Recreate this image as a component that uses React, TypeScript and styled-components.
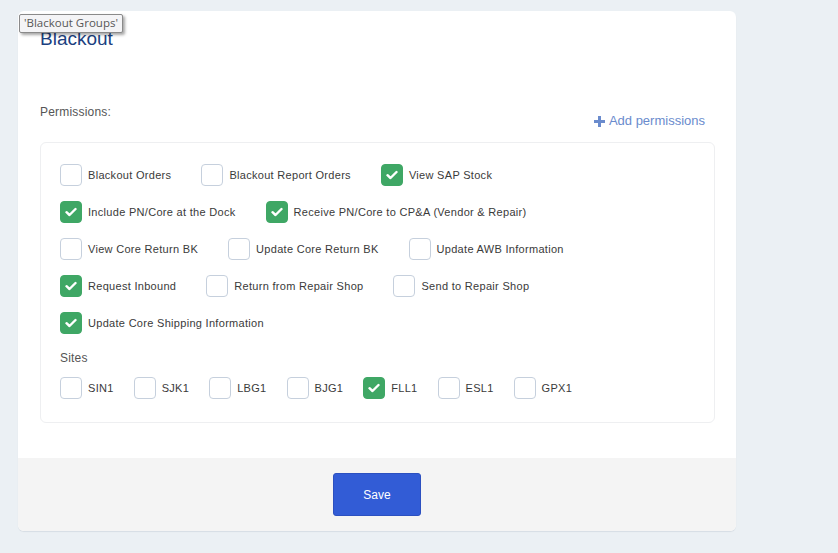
import styled, { createGlobalStyle } from "styled-components";

const GlobalStyle = createGlobalStyle`
  html, body {
    margin: 0;
    padding: 0;
    background: #ebf0f4;
    font-family: "Liberation Sans", Arial, sans-serif;
  }
`;

const Page = styled.div`
  padding: 11px 102px 22px 18px;
  min-height: 553px;
  box-sizing: border-box;
`;

const Card = styled.div`
  position: relative;
  width: 718px;
  background: #fff;
  border-radius: 6px;
  box-shadow: 0 1px 1px rgba(40, 60, 90, 0.1);
`;

const Body = styled.div`
  padding: 17px 21px 35px 22px;
`;

const Title = styled.h1`
  margin: 0;
  font-size: 19px;
  line-height: 22px;
  font-weight: 400;
  color: #1b3f80;
`;

// hover title of the page tab, drawn over the heading
const Tooltip = styled.div`
  position: absolute;
  left: 1px;
  top: 3px;
  padding: 1px 4px 2px;
  font-family: "Open Sans", "Liberation Sans", sans-serif;
  font-size: 11.5px;
  line-height: 14px;
  color: #575757;
  background: #f4f4f6;
  border: 1px solid #8a8a8a;
  border-radius: 2px;
  box-shadow: 2px 2px 3px rgba(0, 0, 0, 0.35);
`;

const PermHeader = styled.div`
  display: flex;
  justify-content: space-between;
  align-items: flex-start;
  margin-top: 55px;
  margin-bottom: 13px;
`;

const Label = styled.div`
  font-size: 12px;
  line-height: 14px;
  color: #555;
  letter-spacing: 0.2px;
`;

const AddLink = styled.a`
  display: flex;
  align-items: center;
  gap: 4px;
  margin-top: 8px;
  margin-right: 10px;
  font-size: 13px;
  line-height: 16px;
  color: #6a8bcd;
  cursor: pointer;
`;

const Panel = styled.div`
  border: 1px solid #eeeff1;
  border-radius: 6px;
  padding: 21px 19px 23px 19px;
  display: flex;
  flex-direction: column;
  gap: 15px;
`;

const Row = styled.div<{ $gap: number }>`
  display: flex;
  align-items: center;
  gap: ${(p) => p.$gap}px;
`;

const Item = styled.label`
  display: flex;
  align-items: center;
  gap: 6px;
  font-size: 11px;
  letter-spacing: 0.3px;
  color: #3a3a3a;
  cursor: pointer;
`;

const Box = styled.span<{ $checked: boolean }>`
  box-sizing: border-box;
  width: 22px;
  height: 22px;
  border-radius: 4px;
  display: flex;
  align-items: center;
  justify-content: center;
  border: 1px solid ${(p) => (p.$checked ? "#3fa765" : "#c6d0dd")};
  background: ${(p) => (p.$checked ? "#3fa765" : "#fff")};
`;

const SitesLabel = styled(Label)`
  margin-top: 2px;
  margin-bottom: -3px;
`;

const Footer = styled.div`
  background: #f4f4f4;
  height: 73px;
  border-radius: 0 0 6px 6px;
  display: flex;
  justify-content: center;
  align-items: center;
`;

const SaveButton = styled.button`
  width: 88px;
  height: 43px;
  border: 1px solid #2c50c0;
  border-radius: 3px;
  background: #325cd6;
  color: #fff;
  font-family: "Liberation Sans", Arial, sans-serif;
  font-size: 12px;
  cursor: pointer;
`;

const Check = () => (
  <svg width="12" height="10" viewBox="0 0 12 10">
    <path
      d="M1.5 5.2 L4.5 8 L10.5 2"
      fill="none"
      stroke="#fff"
      strokeWidth="2.4"
      strokeLinecap="round"
      strokeLinejoin="round"
    />
  </svg>
);

function CheckItem({ label, checked }: { label: string; checked?: boolean }) {
  return (
    <Item>
      <Box $checked={!!checked}>{checked && <Check />}</Box>
      {label}
    </Item>
  );
}

const rows: [string, boolean][][] = [
  [
    ["Blackout Orders", false],
    ["Blackout Report Orders", false],
    ["View SAP Stock", true],
  ],
  [
    ["Include PN/Core at the Dock", true],
    ["Receive PN/Core to CP&A (Vendor & Repair)", true],
  ],
  [
    ["View Core Return BK", false],
    ["Update Core Return BK", false],
    ["Update AWB Information", false],
  ],
  [
    ["Request Inbound", true],
    ["Return from Repair Shop", false],
    ["Send to Repair Shop", false],
  ],
  [["Update Core Shipping Information", true]],
];

const sites: [string, boolean][] = [
  ["SIN1", false],
  ["SJK1", false],
  ["LBG1", false],
  ["BJG1", false],
  ["FLL1", true],
  ["ESL1", false],
  ["GPX1", false],
];

export default function App() {
  return (
    <Page>
      <GlobalStyle />
      <Card>
        <Tooltip>'Blackout Groups'</Tooltip>
        <Body>
          <Title>Blackout</Title>
          <PermHeader>
            <Label>Permissions:</Label>
            <AddLink>
              <svg width="11" height="11" viewBox="0 0 11 11">
                <path d="M4 0h3v4h4v3H7v4H4V7H0V4h4z" fill="#6a8bcd" />
              </svg>
              Add permissions
            </AddLink>
          </PermHeader>
          <Panel>
            {rows.map((r, i) => (
              <Row key={i} $gap={30}>
                {r.map(([l, c]) => (
                  <CheckItem key={l} label={l} checked={c} />
                ))}
              </Row>
            ))}
            <SitesLabel>Sites</SitesLabel>
            <Row $gap={20}>
              {sites.map(([l, c]) => (
                <CheckItem key={l} label={l} checked={c} />
              ))}
            </Row>
          </Panel>
        </Body>
        <Footer>
          <SaveButton>Save</SaveButton>
        </Footer>
      </Card>
    </Page>
  );
}
